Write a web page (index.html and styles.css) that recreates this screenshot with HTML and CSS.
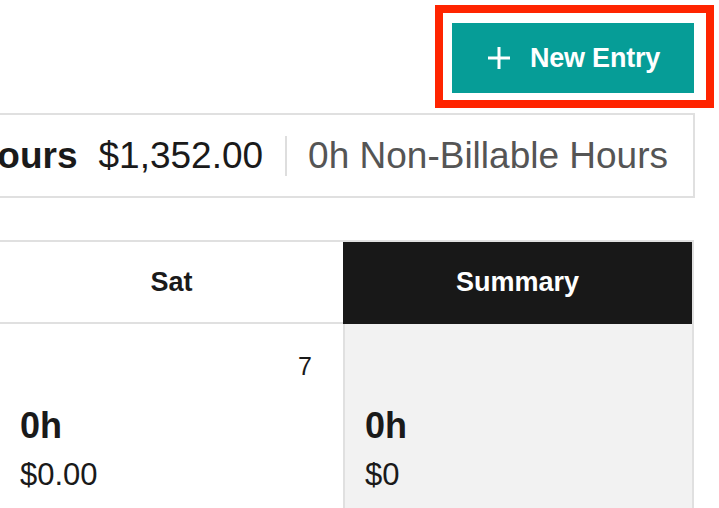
FILE: index.html
```html
<!DOCTYPE html>
<html lang="en">
<head>
    <meta charset="UTF-8">
    <meta name="viewport" content="width=device-width, initial-scale=1.0">
    <title>Timesheet</title>
    <link rel="stylesheet" href="styles.css">
</head>
<body>
    <div class="page">
        <div class="toolbar">
            <div class="focus-ring">
                <button class="new-entry">
                    <svg class="plus" width="26" height="26" viewBox="0 0 26 26"><path d="M13 2v22M2 13h22" stroke="#fff" stroke-width="3" fill="none"/></svg>
                    <span>New Entry</span>
                </button>
            </div>
        </div>

        <div class="totals">
            <span class="total-hours">32h Billable Hours</span>
            <span class="total-amount">$1,352.00</span>
            <span class="divider"></span>
            <span class="non-billable">0h Non-Billable Hours</span>
        </div>

        <div class="week">
            <div class="head">Sat</div>
            <div class="head summary">Summary</div>
            <div class="cell">
                <div class="day-num">7</div>
                <div class="hours">0h</div>
                <div class="amount">$0.00</div>
            </div>
            <div class="cell summary-cell">
                <div class="day-num">&nbsp;</div>
                <div class="hours">0h</div>
                <div class="amount">$0</div>
            </div>
        </div>
    </div>
</body>
</html>
```

FILE: styles.css
```css
*{margin:0;padding:0;box-sizing:border-box}
body{width:719px;height:508px;overflow:hidden;background:#fff;font-family:"Liberation Sans",Arial,sans-serif;color:#1a1a1a}
.page{width:719px;display:flex;flex-direction:column;align-items:flex-end}

/* new entry button with focus outline */
.toolbar{align-self:stretch;display:flex;justify-content:flex-end;padding:5px 5px 0 0}
.focus-ring{border:8px solid #ff2400;padding:10px 12px 7px 9px}
.new-entry{width:242px;height:70px;display:flex;align-items:center;justify-content:center;gap:18px;background:#069d97;border:none;color:#fff;font-family:inherit;font-weight:bold;font-size:27px;letter-spacing:-0.2px;cursor:pointer}
.plus{display:block}

/* totals bar */
.totals{margin:5px 24px 0 0;height:85px;border:2px solid #e0e0e0;display:flex;align-items:center;justify-content:flex-end;padding-right:25px;font-size:37px;white-space:nowrap}
.total-hours{font-weight:bold;margin-right:21px}
.divider{width:2px;height:40px;background:#dedede;margin:0 21px 0 22px}
.non-billable{color:#555}

/* week grid */
.week{margin:42px 25px 0 0;width:694px;display:grid;grid-template-columns:343px 1fr;border-top:2px solid #e0e0e0;border-right:2px solid #e0e0e0}
.head{height:82px;display:flex;align-items:center;justify-content:center;font-weight:bold;font-size:27px;border-bottom:2px solid #e0e0e0}
.head.summary{background:#181818;color:#fff;border-bottom-color:#181818}
.cell{height:190px;padding:28px 31px 0 20px}
.summary-cell{background:#f2f2f2;border-left:2px solid #e0e0e0}
.day-num{text-align:right;font-size:25px;line-height:28px}
.hours{margin-top:25px;font-weight:bold;font-size:36px;line-height:42px}
.amount{margin-top:10px;font-size:31px;line-height:36px}
```
